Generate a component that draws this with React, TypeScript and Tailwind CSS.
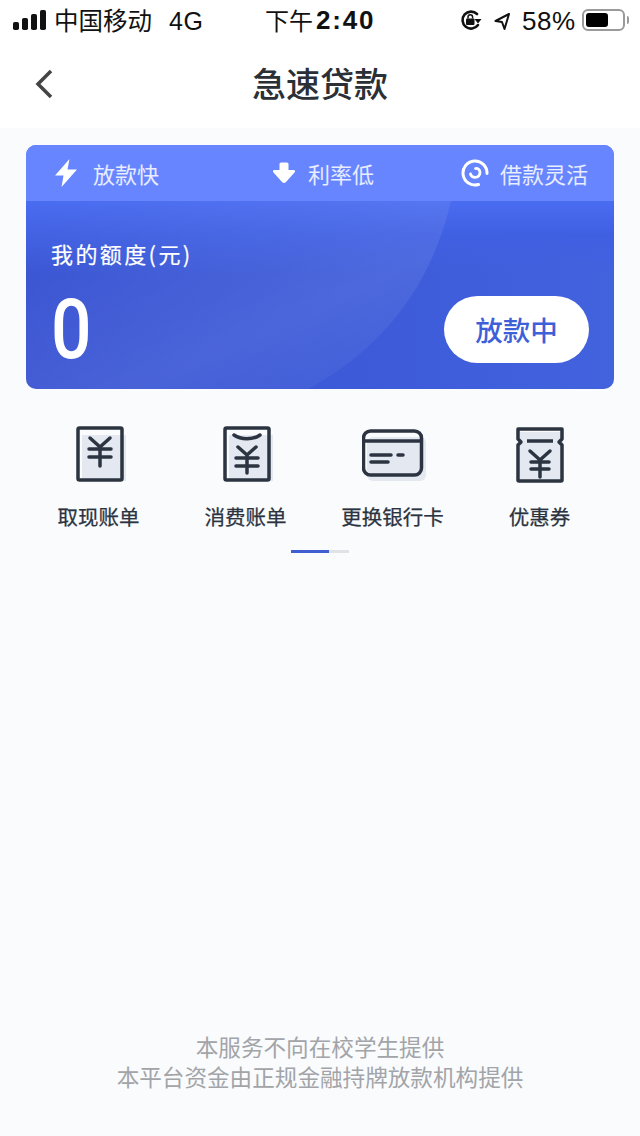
const cjk = { fontFamily: '"Noto Sans CJK SC", "Liberation Sans", sans-serif' };

function Signal() {
  return (
    <svg width="34" height="20" viewBox="0 0 34 20" fill="#111">
      <rect x="0" y="12" width="6" height="8" rx="1.800" />
      <rect x="9" y="8" width="6" height="12" rx="1.800" />
      <rect x="18" y="4" width="6" height="16" rx="1.800" />
      <rect x="27" y="0" width="6" height="20" rx="1.800" />
    </svg>
  );
}

function StatusBar() {
  return (
    <div className="relative h-[42px] bg-white text-[#111]">
      <div className="absolute left-[13px] top-[10px] flex items-center">
        <Signal />
      </div>
      <span className="absolute left-[54px] top-[5px] text-[24.500px] leading-[30px]" style={cjk}>中国移动</span>
      <span className="absolute left-[169px] top-[6px] text-[25px] leading-[30px] tracking-[0.5px] font-['Liberation_Sans']">4G</span>
      <div className="absolute left-[265px] top-[5px] flex items-center text-[24px] leading-[30px]">
        <span style={cjk}>下午</span>
        <span className="ml-[3px] text-[26px] font-['Liberation_Sans'] font-bold tracking-[1.800px]">2:40</span>
      </div>
      <svg className="absolute left-[460px] top-[9px]" width="23" height="22" viewBox="0 0 23 22" fill="none">
        <path d="M17 5A8.500 8.500 0 1 0 18 16" stroke="#111" strokeWidth="2.600" strokeLinecap="round" />
        <path d="M14.500 10h7l-3.500 4.500z" fill="#111" />
        <rect x="6" y="9.500" width="8.500" height="6.500" rx="1" fill="#111" />
        <path d="M8 9.500V8a2.300 2.300 0 0 1 4.600 0v1.500" stroke="#111" strokeWidth="1.500" />
      </svg>
      <svg className="absolute left-[494px] top-[11px]" width="20" height="20" viewBox="0 0 20 20" fill="none">
        <path d="M15 3 1.500 10l6.500 1 2.500 7z" stroke="#111" strokeWidth="2" strokeLinejoin="round" />
      </svg>
      <span className="absolute left-[522px] top-[6px] text-[26px] leading-[30px] tracking-[0.500px] font-['Liberation_Sans']">58%</span>
      <div className="absolute left-[582px] top-[9px] h-[22px] w-[43px] rounded-[6px] border-2 border-[#9a9a9a] p-[2px]">
        <div className="h-full w-[22px] rounded-[3px] bg-black" />
      </div>
      <div className="absolute left-[627px] top-[16px] h-[8px] w-[2px] rounded-r-sm bg-[#9a9a9a]" />
    </div>
  );
}

function Bolt() {
  return (
    <svg width="24" height="30" viewBox="0 0 24 30" fill="#fff">
      <path d="M15.500 1 1 17.500h8.500L7.500 29 23 11.500h-9.500z" />
    </svg>
  );
}
function DownArrow() {
  return (
    <svg width="24" height="22" viewBox="0 0 24 22" fill="#fff">
      <path d="M7.500 2a1.500 1.500 0 0 1 1.500-1.500h6A1.500 1.500 0 0 1 16.500 2v6h5.200a1.300 1.300 0 0 1 1 2.200l-8.700 9.800a2.700 2.700 0 0 1-4 0L1.300 10.200a1.300 1.300 0 0 1 1-2.200h5.200z" />
    </svg>
  );
}
function Swirl() {
  return (
    <svg width="28" height="28" viewBox="0 0 28 28" fill="none" stroke="#fff" strokeLinecap="round">
      <path d="M26 14.500A12 12 0 1 0 17.500 25.500" strokeWidth="3" />
      <path d="M9.500 15C10 19.500 18.500 20 19 13.500 19 10.500 16.500 9 14.500 9.500" strokeWidth="2.800" />
    </svg>
  );
}

function Feature({ icon, label, className }: { icon: React.ReactNode; label: string; className: string }) {
  return (
    <div className={`flex items-center ${className}`}>
      {icon}
      <span className="text-[22px] leading-[28px] text-white/85" style={cjk}>{label}</span>
    </div>
  );
}

function Card() {
  return (
    <div className="relative mx-[26px] mt-[17px] h-[244px] overflow-hidden rounded-[10px] bg-[linear-gradient(180deg,#4a6cf0_56px,#4060e2_90px,#4060e200_130px),linear-gradient(90deg,#3752d2,#4262de)]">
      <svg className="absolute left-0 top-[56px]" width="588" height="188" viewBox="0 0 588 188">
        <defs>
          <linearGradient id="arc" x1="0" y1="0" x2="1" y2="1">
            <stop offset="0" stopColor="#fff" stopOpacity="0" />
            <stop offset="0.62" stopColor="#fff" stopOpacity="0.08" />
            <stop offset="1" stopColor="#fff" stopOpacity="0.01" />
          </linearGradient>
        </defs>
        <path d="M100 0H425C404 90 352 150 282 188H0V0z" fill="url(#arc)" />
      </svg>
      <div className="relative flex h-[56px] items-center justify-between bg-[#6785ff] pl-[28px] pr-[26px]">
        <Feature className="gap-[15px]" icon={<Bolt />} label="放款快" />
        <Feature className="ml-[26px] gap-[12px]" icon={<DownArrow />} label="利率低" />
        <Feature className="gap-[11px]" icon={<Swirl />} label="借款灵活" />
      </div>
      <div className="relative flex h-[188px] flex-col pl-[26px] pr-[25px]">
        <div className="-ml-[1px] mt-[37px] text-[22px] leading-[30px] tracking-[2.400px] text-white [-webkit-text-stroke:0.2px_#fff]" style={cjk}>我的额度(元)</div>
        <div className="mt-[28px] flex items-center justify-between">
          <span className="relative -left-[1px] origin-left scale-x-[0.85] text-[84px] leading-[66px] font-['Roboto'] font-medium text-white">0</span>
          <div className="flex h-[67px] w-[145px] items-center justify-center rounded-full bg-white text-[27.500px] font-medium text-[#3f5fd8]" style={cjk}>放款中</div>
        </div>
      </div>
    </div>
  );
}

const ink = "#2b3440";

function Ticket() {
  return (
    <svg width="52" height="58" viewBox="0 0 52 58" fill="none">
      <rect x="5" y="6" width="43" height="50" fill="#e3e8f1" />
      <path d="M3 3h44v10l-3 3 3 3v35a1 1 0 0 1-1 1H4a1 1 0 0 1-1-1V19l3-3-3-3z" stroke={ink} strokeWidth="3.500" strokeLinejoin="round" />
      <path d="M12 15h26" stroke={ink} strokeWidth="3.500" />
      <path d="M15 25l10 9 10-9M16 36h18M16 43h18M25 34v17" stroke={ink} strokeWidth="3.500" strokeLinecap="round" />
    </svg>
  );
}
function BillA() {
  return (
    <svg width="52" height="58" viewBox="0 0 52 58" fill="none">
      <rect x="6" y="9" width="44" height="46" fill="#e3e8f1" />
      <rect x="2" y="2" width="44" height="52" rx="1.500" stroke={ink} strokeWidth="3.500" />
      <path d="M14 12l10 9 10-9M13 23h22M13 31h22M24 21v19" stroke={ink} strokeWidth="3.500" strokeLinecap="round" />
    </svg>
  );
}
function BillB() {
  return (
    <svg width="52" height="58" viewBox="0 0 52 58" fill="none">
      <rect x="6" y="9" width="44" height="46" fill="#e3e8f1" />
      <rect x="2" y="2" width="44" height="52" rx="1.500" stroke={ink} strokeWidth="3.500" />
      <path d="M11 9c7 5 19 5 26 0" stroke={ink} strokeWidth="3.500" strokeLinecap="round" />
      <path d="M15 21l9 8 9-8M13 32h22M13 40h22M24 29v18" stroke={ink} strokeWidth="3.500" strokeLinecap="round" />
    </svg>
  );
}
function BankCard() {
  return (
    <svg width="64" height="52" viewBox="0 0 64 52" fill="none">
      <rect x="5" y="8" width="59" height="44" rx="6" fill="#e3e8f1" />
      <rect x="1.500" y="2" width="58" height="44" rx="7" stroke={ink} strokeWidth="3.500" />
      <path d="M2 12h57" stroke={ink} strokeWidth="3.500" />
      <path d="M9 26h20M36 26h5M9 33h17" stroke={ink} strokeWidth="3.500" strokeLinecap="round" />
    </svg>
  );
}

function Item({ icon, label, iconClass }: { icon: React.ReactNode; label: string; iconClass: string }) {
  return (
    <div className="flex w-[147px] flex-col items-center">
      <div className={`flex h-[60px] items-end justify-center ${iconClass}`}>{icon}</div>
      <span className="-ml-[2px] mt-[18px] text-[20.500px] leading-[28px] text-[#2b3340] [-webkit-text-stroke:0.25px_#2b3340]" style={cjk}>{label}</span>
    </div>
  );
}

export default function App() {
  return (
    <div className="flex h-[1136px] w-[640px] flex-col overflow-hidden bg-[#f9fbfd]">
      <StatusBar />
      <div className="relative flex h-[86px] items-center justify-center bg-white">
        <svg className="absolute left-[35px] top-[27px]" width="19" height="30" viewBox="0 0 19 30" fill="none">
          <path d="M16 2 3 15l13 13" stroke="#444" strokeWidth="3.500" />
        </svg>
        <span className="relative -top-[3px] text-[34px] font-medium text-[#2b2f36]" style={cjk}>急速贷款</span>
      </div>
      <Card />
      <div className="mt-[35px] flex px-[26px]">
        <Item iconClass="pl-[4px]" icon={<BillA />} label="取现账单" />
        <Item iconClass="pl-[4px]" icon={<BillB />} label="消费账单" />
        <Item iconClass="pb-[3px]" icon={<BankCard />} label="更换银行卡" />
        <Item iconClass="" icon={<Ticket />} label="优惠券" />
      </div>
      <div className="mx-auto mt-[20px] h-[3px] w-[58px] bg-[#e0e2e8]">
        <div className="h-full w-[38px] bg-[#3f5fd0]" />
      </div>
      <div className="mb-[44px] mt-auto flex flex-col items-center text-[22.600px] leading-[30px] text-[#a2a4a8]" style={cjk}>
        <span>本服务不向在校学生提供</span>
        <span>本平台资金由正规金融持牌放款机构提供</span>
      </div>
    </div>
  );
}
